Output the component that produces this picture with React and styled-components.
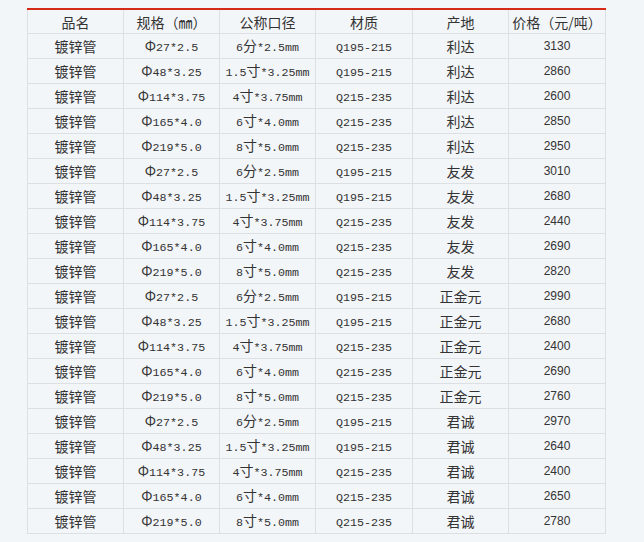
import React from "react";
import styled, { createGlobalStyle } from "styled-components";

const GlobalStyle = createGlobalStyle`
  html, body {
    margin: 0;
    padding: 0;
    background: #f3f6f9;
  }
  body {
    font-family: "Noto Sans CJK SC", sans-serif;
    color: #333;
  }
`;

const columns = [
  { title: "品名", width: 96 },
  { title: "规格（㎜）", width: 96 },
  { title: "公称口径", width: 96 },
  { title: "材质", width: 97 },
  { title: "产地", width: 96 },
  { title: "价格（元/吨）", width: 97 },
];

const specs = [
  ["Φ27*2.5", "6分*2.5mm", "Q195-215"],
  ["Φ48*3.25", "1.5寸*3.25mm", "Q195-215"],
  ["Φ114*3.75", "4寸*3.75mm", "Q215-235"],
  ["Φ165*4.0", "6寸*4.0mm", "Q215-235"],
  ["Φ219*5.0", "8寸*5.0mm", "Q215-235"],
];

const makers = [
  { name: "利达", prices: [3130, 2860, 2600, 2850, 2950] },
  { name: "友发", prices: [3010, 2680, 2440, 2690, 2820] },
  { name: "正金元", prices: [2990, 2680, 2400, 2690, 2760] },
  { name: "君诚", prices: [2970, 2640, 2400, 2650, 2780] },
];

const rows = makers.flatMap((m) =>
  specs.map((s, i) => ({
    spec: s[0],
    size: s[1],
    material: s[2],
    origin: m.name,
    price: m.prices[i],
  }))
);

// split mixed text so the ascii runs get the narrow mono face
const Mixed = ({ text }) => {
  const parts = text.match(/[\x20-\x7e]+|[^\x20-\x7e]+/g) || [];
  return parts.map((p, i) =>
    /^[\x20-\x7e]+$/.test(p) ? <Latin key={i}>{p}</Latin> : <span key={i}>{p}</span>
  );
};

const App = () => {
  return (
    <Page>
      <GlobalStyle />
      <Table>
        <colgroup>
          {columns.map((c) => (
            <col key={c.title} width={c.width} />
          ))}
        </colgroup>
        <thead>
          <tr>
            {columns.map((c) => (
              <Th key={c.title}>{c.title}</Th>
            ))}
          </tr>
        </thead>
        <tbody>
          {rows.map((r, i) => (
            <tr key={i}>
              <Td>镀锌管</Td>
              <Td>
                <Mixed text={r.spec} />
              </Td>
              <Td>
                <Mixed text={r.size} />
              </Td>
              <Td>
                <Mixed text={r.material} />
              </Td>
              <Td>{r.origin}</Td>
              <Td $price>{r.price}</Td>
            </tr>
          ))}
        </tbody>
      </Table>
    </Page>
  );
};

export default App;

const Page = styled.div`
  padding: 8px 0 0 27px;
`;

const Table = styled.table`
  border-collapse: collapse;
  table-layout: fixed;
  width: 579px;
  border-top: 2px solid #d52a17;
`;

const Th = styled.th`
  height: 23px;
  padding: 0;
  font-weight: normal;
  font-size: 14px;
  line-height: 16px;
  text-align: center;
  vertical-align: middle;
  border: 1px solid #dcdfe3;
  border-top: none;
  color: #333;
  white-space: nowrap;
`;

const Td = styled.td`
  height: 24px;
  padding: 0;
  font-size: ${({ $price }) => ($price ? "12px" : "14px")};
  font-family: ${({ $price }) =>
    $price ? '"Liberation Sans", sans-serif' : '"Noto Sans CJK SC", sans-serif'};
  line-height: 16px;
  text-align: center;
  vertical-align: middle;
  border: 1px solid #dcdfe3;
  color: #333;
  white-space: nowrap;
`;

const Latin = styled.span`
  font-family: "Liberation Mono", monospace;
  font-size: 11.7px;
`;
